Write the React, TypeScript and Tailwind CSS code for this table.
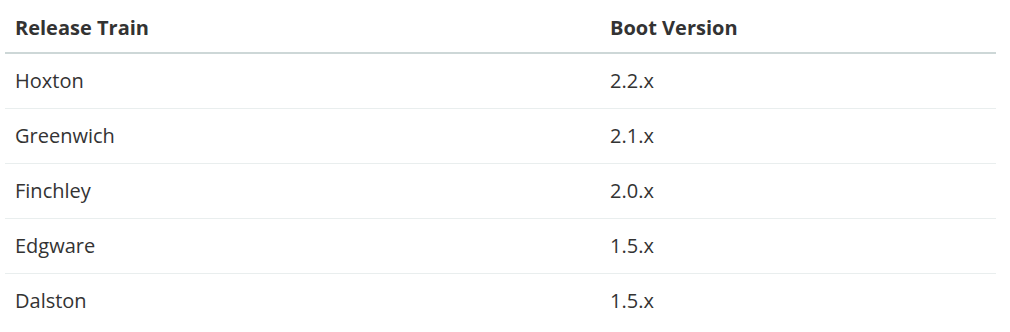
const rows = [
  ["Hoxton", "2.2.x"],
  ["Greenwich", "2.1.x"],
  ["Finchley", "2.0.x"],
  ["Edgware", "1.5.x"],
  ["Dalston", "1.5.x"],
];

export default function App() {
  return (
    <div className="w-[1010px] h-[332px] bg-white pl-[5px] pr-[14px] font-['Open_Sans',sans-serif] text-[20px] text-[#333333]">
      <table className="w-full border-collapse">
        <thead>
          <tr className="border-b-2 border-[#cdd7d7]">
            <th className="w-[595px] h-[53px] px-[10px] text-left font-bold align-middle pt-[4px]">
              Release Train
            </th>
            <th className="h-[53px] px-[10px] text-left font-bold align-middle pt-[4px]">
              Boot Version
            </th>
          </tr>
        </thead>
        <tbody>
          {rows.map(([train, boot], i) => (
            <tr
              key={train}
              className={i < rows.length - 1 ? "border-b border-[#e9eeee]" : ""}
            >
              <td className="h-[55px] px-[10px] align-middle">{train}</td>
              <td className="h-[55px] px-[10px] align-middle">{boot}</td>
            </tr>
          ))}
        </tbody>
      </table>
    </div>
  );
}
